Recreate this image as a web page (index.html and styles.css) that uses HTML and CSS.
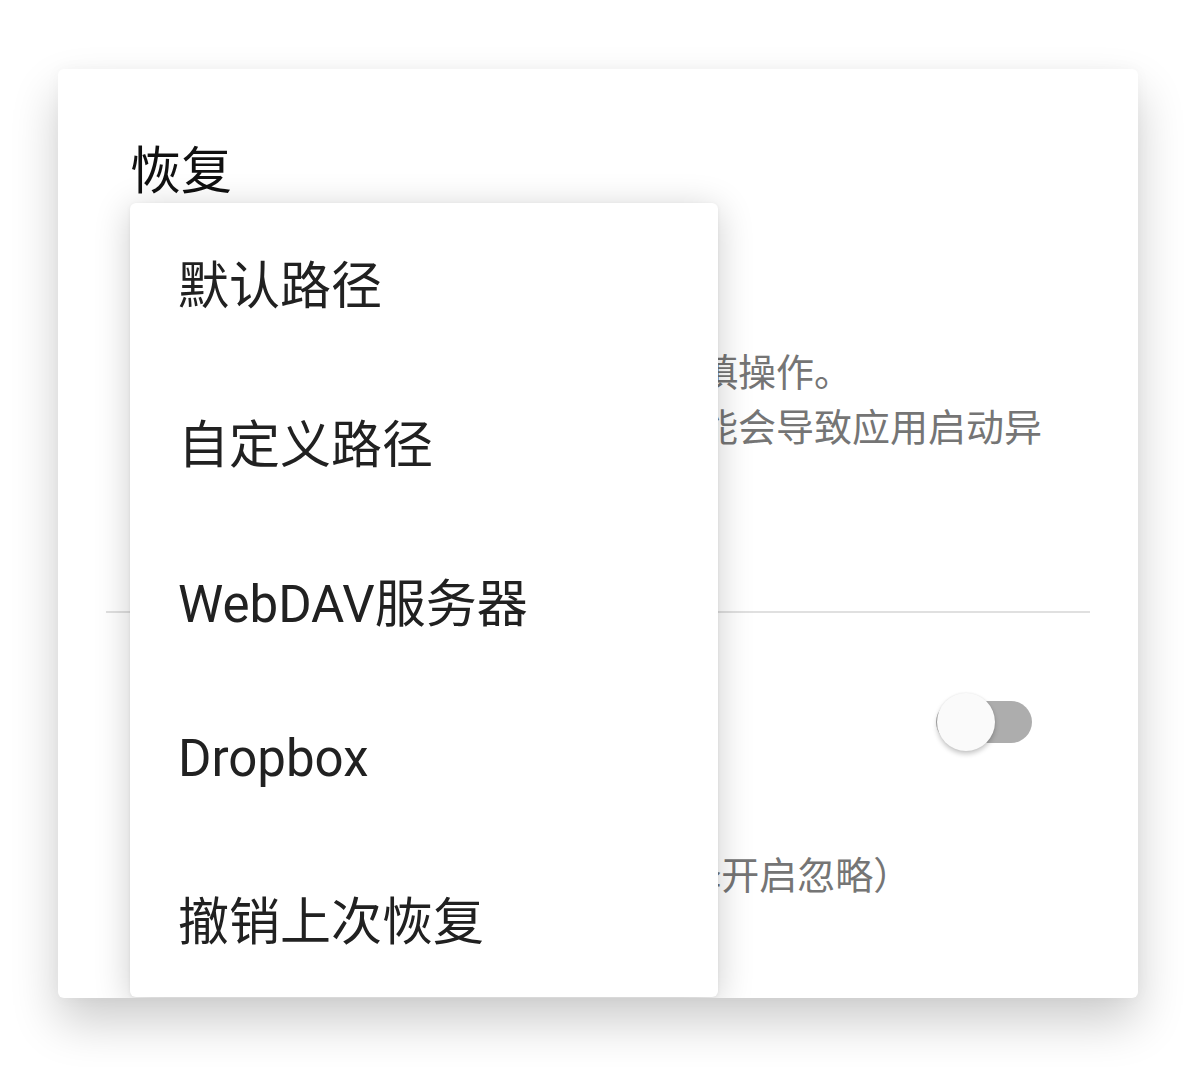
FILE: index.html
```html
<!DOCTYPE html>
<html lang="zh-CN">
<head>
<meta charset="utf-8">
<title>恢复</title>
<link rel="stylesheet" href="styles.css">
</head>
<body>
<div class="card">
  <h1 class="title">恢复</h1>
  <div class="pref pref-info">
    <div class="pref-summary">此操作将覆盖当前所有数据，请谨慎操作。<br>恢复其他版本设备的备份数据，可能会导致应用启动异常。</div>
  </div>
  <div class="divider"></div>
  <div class="pref pref-switch">
    <div class="switch"></div>
  </div>
  <div class="pref pref-note">
    <div class="pref-summary">（若出现权限错误，请在第2项选择开启忽略）</div>
  </div>
  <div class="menu">
    <div class="menu-item">默认路径</div>
    <div class="menu-item">自定义路径</div>
    <div class="menu-item">WebDAV服务器</div>
    <div class="menu-item">Dropbox</div>
    <div class="menu-item">撤销上次恢复</div>
  </div>
</div>
</body>
</html>
```
FILE: styles.css
```css
html, body {
  margin: 0;
  padding: 0;
  background: #ffffff;
}
body {
  font-family: Roboto, "Noto Sans CJK SC", sans-serif;
  width: 1196px;
  height: 1067px;
  overflow: hidden;
}
.card {
  position: relative;
  box-sizing: border-box;
  margin: 69px 0 0 58px;
  width: 1080px;
  height: 929px;
  background: #ffffff;
  border-radius: 6px;
  overflow: hidden;
  box-shadow: 0 24px 48px rgba(0, 0, 0, 0.2), 0 0 16px rgba(0, 0, 0, 0.03);
}
.title {
  margin: 0;
  padding: 73px 72px 0;
  font-size: 51px;
  line-height: 60px;
  font-weight: 400;
  color: #111111;
}
.pref {
  padding: 0 72px;
}
.pref-summary {
  font-size: 38px;
  line-height: 55px;
  color: #757575;
}
.pref-info {
  padding-top: 144px;
  padding-bottom: 100px;
}
.divider {
  height: 2px;
  margin: 0 48px;
  background: #e0e0e0;
}
.pref-switch {
  display: flex;
  align-items: center;
  justify-content: flex-end;
  padding-top: 88px;
  padding-bottom: 88px;
}
.switch {
  position: relative;
  flex-shrink: 0;
  width: 96px;
  height: 42px;
  margin-right: 34px;
  border-radius: 21px;
  background: #adadad;
}
.switch::before {
  content: "";
  position: absolute;
  left: 1px;
  top: -8px;
  width: 58px;
  height: 58px;
  border-radius: 50%;
  background: #fafafa;
  box-shadow: 0 3px 5px rgba(0, 0, 0, 0.22), 0 0 2px rgba(0, 0, 0, 0.08);
}
.pref-note {
  padding-top: 18px;
}
.menu {
  position: absolute;
  left: 72px;
  top: 134px;
  width: 588px;
  height: 794px;
  background: #ffffff;
  border-radius: 6px;
  box-shadow: 0 6px 36px rgba(0, 0, 0, 0.2), 0 1px 4px rgba(0, 0, 0, 0.06);
  display: flex;
  flex-direction: column;
}
.menu-item {
  flex: 1;
  display: flex;
  align-items: center;
  padding-left: 48px;
  font-size: 51px;
  color: #212121;
  white-space: nowrap;
}
```
